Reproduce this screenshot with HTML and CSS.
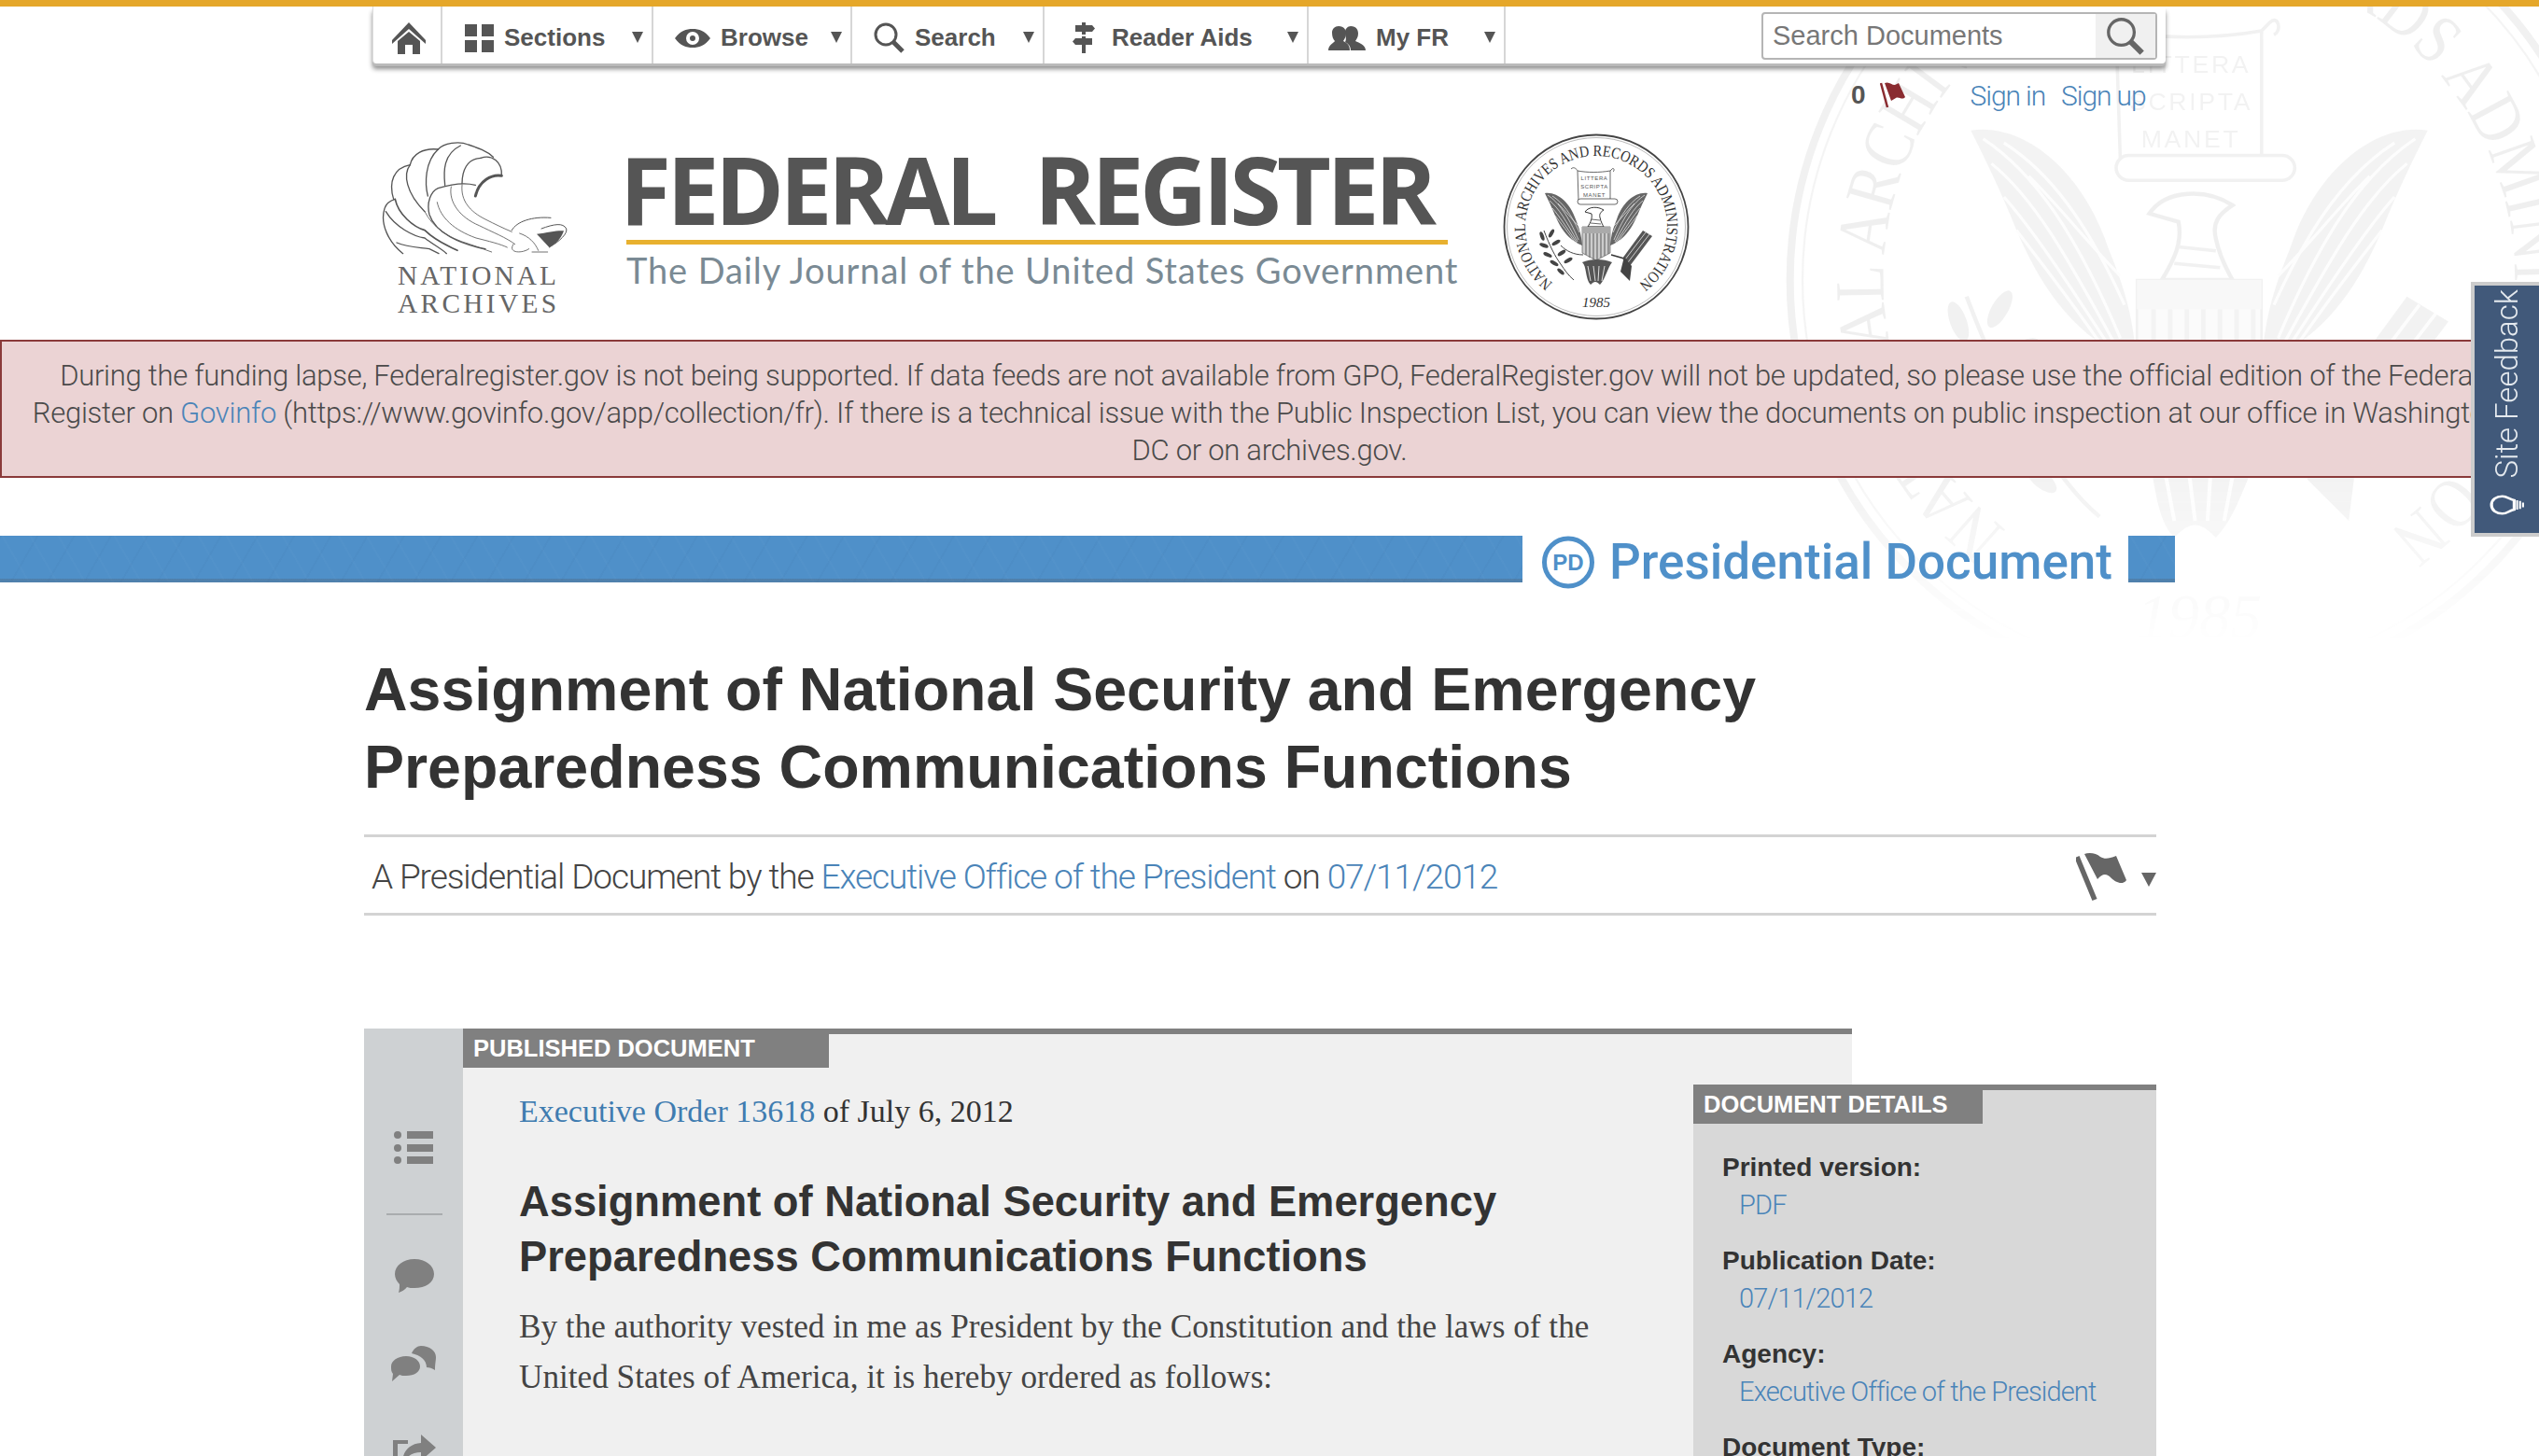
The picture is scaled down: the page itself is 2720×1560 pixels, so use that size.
FILE: index.html
```html
<!DOCTYPE html>
<html lang="en">
<head>
<meta charset="utf-8">
<title>Federal Register</title>
<link rel="stylesheet" href="styles.css">
</head>
<body>
<svg class="defs" width="0" height="0" aria-hidden="true">
  <defs>
    <path id="sealArc" d="M -46.400,60.200 A 76,76 0 1 1 46.400,60.200"/>
    <symbol id="seal" viewBox="-100 -100 200 200" overflow="visible">
      <circle r="98.5" fill="none" stroke="#444" stroke-width="1.8"/>
      <circle r="95.5" fill="none" stroke="#777" stroke-width=".5"/>
      <text class="seal-ring" textLength="378" lengthAdjust="spacingAndGlyphs"><textPath href="#sealArc">NATIONAL ARCHIVES AND RECORDS ADMINISTRATION</textPath></text>
      <text class="seal-year" x="0" y="86" text-anchor="middle">1985</text>
      <path d="M-27,-62 C-24,-65 -21,-62 -20,-60 C-10,-58 4,-58 15,-60 L17,-62 C19,-64 20,-60 18,-59 M-20,-60 L-19,-29 M15,-60 L15,-29" fill="#fff" stroke="#444" stroke-width=".8"/>
      <text class="seal-scroll" x="-2" y="-50" text-anchor="middle">LITTERA</text>
      <text class="seal-scroll" x="-2" y="-41" text-anchor="middle">SCRIPTA</text>
      <text class="seal-scroll" x="-2" y="-32" text-anchor="middle">MANET</text>
      <rect x="-20" y="-30" width="43" height="6" rx="3" fill="#fff" stroke="#444" stroke-width=".8"/>
      <path d="M-55,-36 C-42,-38 -28,-26 -22,-8 C-18,2 -16,8 -15,20 C-30,14 -38,2 -44,-12 C-48,-22 -52,-30 -55,-36 Z" fill="#666"/>
      <path d="M55,-36 C42,-38 28,-26 22,-8 C18,2 16,8 15,20 C30,14 38,2 44,-12 C48,-22 52,-30 55,-36 Z" fill="#666"/>
      <path d="M-52,-34 C-40,-26 -30,-12 -19,14 M-47,-33 C-36,-26 -27,-14 -18,6 M-50,-28 C-40,-20 -32,-6 -20,16 M-47,-20 C-40,-12 -32,0 -21,17 M-44,-12 C-38,-4 -30,6 -22,18 M-41,-25 C-33,-17 -26,-8 -19,-1 M52,-34 C40,-26 30,-12 19,14 M47,-33 C36,-26 27,-14 18,6 M50,-28 C40,-20 32,-6 20,16 M47,-20 C40,-12 32,0 21,17 M44,-12 C38,-4 30,6 22,18 M41,-25 C33,-17 26,-8 19,-1" fill="none" stroke="#f0f0f0" stroke-width=".7"/>
      <path d="M-12,-16 C-8,-22 2,-22 8,-18 C5,-16 3,-14 4,-10 C5,-5 7,-2 8,0 L-9,0 C-6,-5 -4,-9 -5,-14 Z" fill="#fff" stroke="#333" stroke-width="1"/>
      <path d="M-5,-8 L4,-7 M-6,-4 L5,-3" stroke="#444" stroke-width=".8"/>
      <path d="M-15,0 L15,0 L15,28 L0,36 L-15,28 Z" fill="#ccc" stroke="#444" stroke-width=".6"/>
      <path d="M-15,0 H15 V7 H-15 Z" fill="#aaa"/>
      <path d="M-11,7 V30 M-7,7 V33 M-3,7 V35 M1,7 V35 M5,7 V33 M9,7 V31 M13,7 V29" stroke="#666" stroke-width="1.100"/>
      <path d="M-15,38 C-10,42 -12,56 -6,62 C-2,58 0,58 4,62 C10,56 12,44 17,38 C8,34 -6,34 -15,38 Z" fill="#555"/>
      <path d="M-9,42 L-6,58 M-3,42 L-1,58 M3,42 L2,58 M9,42 L6,58" stroke="#eee" stroke-width=".9"/>
      <path d="M-14,30 C-24,30 -32,26 -38,20 M-56,4 C-50,20 -44,32 -38,40 C-34,46 -30,52 -24,57" fill="none" stroke="#444" stroke-width="1"/>
      <g fill="#444">
        <ellipse cx="-58" cy="10" rx="2" ry="5" transform="rotate(-20 -58 10)"/>
        <ellipse cx="-48" cy="7" rx="2" ry="5" transform="rotate(30 -48 7)"/>
        <ellipse cx="-56" cy="20" rx="5" ry="2" transform="rotate(20 -56 20)"/>
        <ellipse cx="-43" cy="17" rx="5" ry="2" transform="rotate(-30 -43 17)"/>
        <ellipse cx="-52" cy="30" rx="5" ry="2" transform="rotate(25 -52 30)"/>
        <ellipse cx="-37" cy="28" rx="5" ry="2" transform="rotate(-35 -37 28)"/>
        <ellipse cx="-45" cy="39" rx="5" ry="2" transform="rotate(30 -45 39)"/>
        <ellipse cx="-30" cy="36" rx="5" ry="2" transform="rotate(-30 -30 36)"/>
        <ellipse cx="-38" cy="48" rx="4.500" ry="2" transform="rotate(40 -38 48)"/>
      </g>
      <path d="M16,30 L30,34" stroke="#333" stroke-width="1.500" fill="none"/>
      <path d="M28,34 L50,4 L60,10 L36,42 Z" fill="#555"/>
      <path d="M31,35 L53,6 M34,38 L57,8" stroke="#eee" stroke-width=".8" fill="none"/>
      <path d="M30,32 L38,42 L36,58 L26,48 Z" fill="#444"/>
    </symbol>
  </defs>
</svg>

<svg class="watermark" viewBox="-100 -100 200 200" aria-hidden="true"><use href="#seal" x="-100" y="-100" width="200" height="200"/></svg>

<div class="topbar"></div>

<nav class="nav">
  <a class="cell home"><svg width="36" height="34" viewBox="0 0 36 34"><path d="M18,0 L36,19 L36,23 L18,7 L0,23 L0,19 Z M6,20 L18,10 L30,20 L30,34 L22,34 L22,24 L14,24 L14,34 L6,34 Z" fill="#555"/></svg></a>
  <a class="cell sections"><svg width="31" height="30" viewBox="0 0 31 30"><path d="M0,0 H13 V13 H0 Z M18,0 H31 V13 H18 Z M0,17 H13 V30 H0 Z M18,17 H31 V30 H18 Z" fill="#555"/></svg><span>Sections</span><i class="caret"></i></a>
  <a class="cell browse"><svg width="38" height="20" viewBox="0 0 38 20"><path d="M0,10 C6,2 12,0 19,0 C26,0 32,2 38,10 C32,18 26,20 19,20 C12,20 6,18 0,10 Z M19,3 A7,7 0 1 0 19,17 A7,7 0 1 0 19,3 Z M19,7 A3,3 0 1 1 19,13 A3,3 0 1 1 19,7 Z" fill="#555" fill-rule="evenodd"/></svg><span>Browse</span><i class="caret"></i></a>
  <a class="cell search"><svg width="33" height="33" viewBox="0 0 33 33"><circle cx="13" cy="13" r="11" fill="none" stroke="#555" stroke-width="3"/><path d="M21,21 L31,31" stroke="#555" stroke-width="5"/></svg><span>Search</span><i class="caret"></i></a>
  <a class="cell aids"><svg width="24" height="33" viewBox="0 0 24 33"><path d="M10,0 H14 V3 H21 L24,6.5 L21,10 H14 V13 H10 V10 H3 V3 H10 Z M10,15 H14 V17 H21 V24 H14 V33 H10 V24 H3 L0,20.500 L3,17 H10 Z" fill="#555"/></svg><span>Reader Aids</span><i class="caret"></i></a>
  <a class="cell myfr"><svg width="40" height="26" viewBox="0 0 40 26"><path d="M24,0 C30,0 32,4 32,8 C32,12 30,14 29,16 C33,18 40,20 40,26 L24,26 C24,22 22,19 18,17 C20,14 18,10 18,6 C18,3 21,0 24,0 Z" fill="#555"/><path d="M11,0 C17,0 19,4 19,8 C19,12 17,14 16,16 C20,18 23,20 23,26 L0,26 C0,20 6,18 7,16 C5,14 4,11 4,7 C4,3 7,0 11,0 Z" fill="#555"/></svg><span>My FR</span><i class="caret"></i></a>
  <div class="searchbox">
    <span class="placeholder">Search Documents</span>
    <span class="searchbtn"><svg width="42" height="42" viewBox="0 0 38 38"><circle cx="15" cy="15" r="12.500" fill="none" stroke="#666" stroke-width="3"/><path d="M24,24 L35,35" stroke="#666" stroke-width="5.500"/></svg></span>
  </div>
</nav>

<div class="account">
  <span class="count">0</span>
  <svg class="miniflag" width="28" height="28" viewBox="0 0 28 28"><path d="M1,1 L8,27" stroke="#8a2b30" stroke-width="2.500"/><path d="M5,1 C10,-1 12,3 16,3 L20,1 L27,16 C24,20 20,15 17,17 L12,20 Z" fill="#8a2b30"/></svg>
  <a class="link signin">Sign in</a>
  <a class="link signup">Sign up</a>
</div>

<header class="masthead">
  <svg class="naralogo" viewBox="0 0 780 660" width="260" height="220" aria-label="National Archives">
    <g fill="none" stroke="#555" stroke-width="4" stroke-linecap="round">
      <path d="M155,425 C110,390 80,330 96,280 C102,262 116,254 130,250"/>
      <path d="M125,250 C108,195 125,150 178,140"/>
      <path d="M178,140 C185,105 220,85 268,90"/>
      <path d="M268,90 C285,70 335,62 365,75 C395,85 425,95 445,115"/>
      <path d="M405,118 C440,105 475,130 472,175"/>
      <path d="M472,175 C440,170 400,190 388,240" stroke-width="9"/>
      <path d="M388,205 C350,195 300,205 268,215 C245,225 230,260 240,300 C260,360 340,395 420,410"/>
      <path d="M178,140 C155,170 165,230 225,290"/>
      <path d="M268,90 C225,130 225,200 235,240"/>
      <path d="M340,78 C285,105 285,160 290,205"/>
      <path d="M405,118 C360,120 345,160 345,200"/>
      <path d="M130,250 C140,300 190,340 225,350 C260,385 300,400 330,415" stroke-width="5"/>
      <path d="M100,290 C130,340 190,370 225,375 C250,395 280,410 295,425"/>
      <path d="M135,390 C170,405 205,405 240,410 L270,425"/>
      <path d="M310,210 C300,260 340,310 400,335 C440,355 490,375 515,395" stroke-width="2.500"/>
      <path d="M345,205 C340,255 370,290 420,315 C450,330 480,345 505,355" stroke-width="2.500"/>
      <path d="M265,260 C275,310 320,350 390,375 C430,385 470,395 490,405" stroke-width="2.500"/>
      <path d="M225,290 C250,340 300,375 370,395 L440,420" stroke-width="2.500"/>
      <path d="M505,350 C520,322 570,305 630,310 M600,345 C640,330 670,325 680,345 C685,360 660,385 625,405" stroke-width="3"/>
      <path d="M510,395 C490,425 540,425 560,410 M570,420 L620,420 M530,360 C560,370 580,390 590,415" stroke-width="2.500"/>
    </g>
    <path d="M585,362 C620,358 650,350 672,352 C665,375 645,395 625,405 Z" fill="#555"/>
    <text class="nara-text" x="138" y="524" textLength="510">NATIONAL</text>
    <text class="nara-text" x="138" y="614" textLength="510">ARCHIVES</text>
  </svg>
  <div class="wordmark">
    <div class="fr-title">FEDERAL&nbsp; REGISTER</div>
    <div class="fr-rule"></div>
    <div class="fr-tag">The Daily Journal of the United States Government</div>
  </div>
  <svg class="smallseal" width="200" height="200" viewBox="-100 -100 200 200" aria-label="Seal"><use href="#seal" x="-100" y="-100" width="200" height="200"/></svg>
</header>

<aside class="banner">
  During the funding lapse, Federalregister.gov is not being supported. If data feeds are not available from GPO, FederalRegister.gov will not be updated, so please use the official edition of the Federal<br>
  Register on <a class="link">Govinfo</a> (https://www.govinfo.gov/app/collection/fr). If there is a technical issue with the Public Inspection List, you can view the documents on public inspection at our office in Washington,<br>
  DC or on archives.gov.
</aside>

<div class="band">
  <div class="band-bar"></div>
  <svg class="pd" width="56" height="57" viewBox="0 0 56 57"><circle cx="28" cy="28.500" r="25.500" fill="none" stroke="#4f90c9" stroke-width="5"/><text x="28" y="37" text-anchor="middle" class="pd-text">PD</text></svg>
  <div class="band-title">Presidential Document</div>
  <div class="band-end"></div>
</div>

<main class="page">
  <h1 class="title">Assignment of National Security and Emergency<br>Preparedness Communications Functions</h1>
  <div class="byline">
    <span>A Presidential Document by the <a class="link">Executive Office of the President</a> on <a class="link">07/11/2012</a></span>
    <span class="flagset">
      <svg width="55" height="52" viewBox="0 0 55 52"><path d="M1,4 L20,50" stroke="#666" stroke-width="5.500"/><path d="M9,1 C14,-1 22,0 26,4 C31,7 35,6 43,3 L54,29 C50,35 42,31 38,27 C33,22 29,21 23,28 Z" fill="#666"/></svg>
      <i class="caret big"></i>
    </span>
  </div>
  <section class="doc">
    <div class="rail">
      <svg class="r-list" width="42" height="36" viewBox="0 0 42 36"><g fill="#808080"><circle cx="4" cy="4" r="4"/><circle cx="4" cy="18" r="4"/><circle cx="4" cy="31" r="4"/><rect x="14" y="0" width="28" height="8"/><rect x="14" y="14" width="28" height="8"/><rect x="14" y="27" width="28" height="8"/></g></svg>
      <div class="r-rule"></div>
      <svg class="r-comment" width="42" height="36" viewBox="0 0 42 36"><path d="M21,0 C33,0 42,7 42,16 C42,25 33,31 21,31 C18,31 15,31 13,30 C11,33 7,35 4,36 C5,33 5,29 5,27 C2,24 0,20 0,16 C0,7 9,0 21,0 Z" fill="#808080"/></svg>
      <svg class="r-comments" width="48" height="38" viewBox="0 0 48 38"><path d="M32,0 C41,0 48,5 48,12 C48,16 47,19 47,26 C44,24 41,23 38,23 C38,15 31,10 22,8 C24,3 28,0 32,0 Z" fill="#808080"/><path d="M16,11 C25,11 31,16 31,22 C31,28 25,32 16,32 C13,32 11,32 9,31 L1,38 L2,30 C0,28 0,25 0,22 C0,16 7,11 16,11 Z" fill="#808080"/></svg>
      <svg class="r-share" width="46" height="44" viewBox="0 0 46 44"><path d="M30,0 L46,14 L30,28 L30,19 C20,19 13,24 10,34 C9,20 16,10 30,9 Z" fill="#808080"/><path d="M0,6 H16 V10 H5 V44 H0 Z" fill="#808080"/></svg>
    </div>
    <div class="main">
      <div class="tab tab-pub">PUBLISHED DOCUMENT</div>
      <div class="body">
        <p class="eo"><a class="link">Executive Order 13618</a> of July 6, 2012</p>
        <h2 class="subtitle">Assignment of National Security and Emergency<br>Preparedness Communications Functions</h2>
        <p class="para">By the authority vested in me as President by the Constitution and the laws of the<br>United States of America, it is hereby ordered as follows:</p>
      </div>
    </div>
    <div class="details">
      <div class="tab tab-det">DOCUMENT DETAILS</div>
      <dl class="dl">
        <dt>Printed version:</dt><dd><a class="link">PDF</a></dd>
        <dt>Publication Date:</dt><dd><a class="link">07/11/2012</a></dd>
        <dt>Agency:</dt><dd><a class="link">Executive Office of the President</a></dd>
        <dt>Document Type:</dt>
      </dl>
    </div>
  </section>
</main>

<a class="feedback">
  <span class="fb-text">Site Feedback</span>
  <svg class="fb-icon" width="22" height="38" viewBox="0 0 26 36" preserveAspectRatio="none"><path d="M13,2 C20,2 24,7 24,13 C24,18 20,20 19,25 L7,25 C6,20 2,18 2,13 C2,7 6,2 13,2 Z" fill="none" stroke="#fff" stroke-width="3"/><path d="M7,28 H19 M8,31 H18 M10,34 H16" stroke="#fff" stroke-width="2"/></svg>
</a>
</body>
</html>
```

FILE: styles.css
```css
* { box-sizing: border-box; }
html, body { margin: 0; padding: 0; }
body {
  position: relative;
  width: 2720px;
  height: 1560px;
  overflow: hidden;
  background: #fff;
  color: #333;
  font-family: "Liberation Sans", Arial, sans-serif;
}
a { text-decoration: none; }
.link { color: #4a84b8; }
.defs { position: absolute; }

.watermark {
  position: absolute;
  left: 1911px;
  top: -145px;
  width: 890px;
  height: 890px;
  opacity: .07;
  pointer-events: none;
  -webkit-mask-image: linear-gradient(to bottom, #000 640px, transparent 840px);
  mask-image: linear-gradient(to bottom, #000 640px, transparent 840px);
}
.seal-ring { font: 17px "Liberation Serif", serif; fill: #333; }
.seal-year { font: italic 15px "Liberation Serif", serif; fill: #333; }
.seal-scroll { font: 6px "Liberation Sans", sans-serif; fill: #555; letter-spacing: .6px; }

.topbar { position: relative; height: 7px; background: #e5a72a; }

/* nav */
.nav {
  position: relative;
  display: flex;
  align-items: stretch;
  width: 1921px;
  height: 61px;
  margin-left: 399px;
  background: #fff;
  border-left: 1px solid #ddd;
  box-shadow: 0 3px 1px #bbb, 0 6px 5px rgba(0,0,0,.45);
  border-radius: 0 0 4px 4px;
}
.cell {
  display: flex;
  align-items: center;
  padding-top: 6px;
  border-right: 2px solid #d6d6d6;
  color: #555;
  font-size: 26px;
  font-weight: 700;
  position: relative;
}
.cell svg { flex: none; margin-right: 11px; }
.home { width: 74px; padding-left: 20px; }
.sections { width: 226px; padding-left: 24px; }
.browse { width: 213px; padding-left: 23px; }
.search { width: 206px; padding-left: 23px; }
.aids { width: 283px; padding-left: 30px; }
.aids svg { margin-right: 18px; }
.myfr { width: 211px; padding-left: 21px; }
.caret {
  width: 0;
  height: 0;
  border-left: 6px solid transparent;
  border-right: 6px solid transparent;
  border-top: 12px solid #555;
}
.cell .caret { position: absolute; right: 9px; top: 27px; }
.searchbox {
  display: flex;
  align-items: stretch;
  width: 424px;
  height: 51px;
  margin: 6px 9px 0 auto;
  border: 2px solid #b5b5b5;
  border-radius: 4px;
  background: #fff;
}
.placeholder {
  flex: 1;
  padding-left: 10px;
  font-size: 29px;
  line-height: 46px;
  color: #777;
}
.searchbtn {
  display: flex;
  align-items: center;
  justify-content: center;
  width: 64px;
  background: #f0f0f0;
}

/* account */
.account {
  position: relative;
  display: flex;
  align-items: center;
  height: 62px;
  padding: 6px 0 0 1983px;
}
.count { font-weight: 700; color: #555; font-size: 28px; }
.miniflag { margin-left: 15px; }
.account .link { font-family: Roboto, sans-serif; font-weight: 300; font-size: 30px; letter-spacing: -1.100px; }
.signin { margin-left: 69px; }
.signup { margin-left: 17px; }

/* masthead */
.masthead {
  position: relative;
  display: flex;
  align-items: flex-start;
  height: 234px;
  padding-left: 380px;
}
.naralogo { flex: none; }
.nara-text { font: 88px "Liberation Serif", serif; fill: #666; }
.wordmark { width: 885px; margin-left: 28px; }
.fr-title {
  margin: 18px 0 0 -4px;
  font-family: "Open Sans", sans-serif;
  font-size: 100px;
  line-height: 109px;
  font-weight: 700;
  color: #555;
  letter-spacing: -4.500px;
  white-space: nowrap;
}
.fr-rule { width: 880px; height: 5px; margin: 0 0 0 3px; background: #e8b12f; }
.fr-tag {
  margin: 4px 0 0 3px;
  font-family: Lato, sans-serif;
  font-size: 38px;
  line-height: 46px;
  color: #7a8a94;
  letter-spacing: .9px;
  white-space: nowrap;
}
.smallseal { flex: none; margin: 13px 0 0 57px; }

/* banner */
.banner {
  position: relative;
  height: 148px;
  padding: 17px 0 0;
  background: #ebd3d4;
  border: 2px solid #8a3a3a;
  font-family: Roboto, sans-serif;
  font-weight: 300;
  font-size: 31px;
  letter-spacing: -.28px;
  line-height: 40px;
  color: #4a4a4a;
  text-align: center;
  white-space: nowrap;
}

/* band */
.band {
  position: relative;
  display: flex;
  align-items: flex-start;
  height: 50px;
  margin-top: 62px;
}
.band-bar, .band-end {
  height: 50px;
  background:
    linear-gradient(to bottom, transparent 46px, rgba(80,100,120,.35) 46px),
    repeating-linear-gradient(60deg, rgba(255,255,255,.02) 0 2px, transparent 2px 26px),
    repeating-linear-gradient(120deg, rgba(0,0,60,.025) 0 2px, transparent 2px 34px),
    #4f90c9;
}
.band-bar { width: 1631px; }
.band-end { width: 50px; margin-left: 20px; }
.pd { flex: none; margin-left: 21px; }
.pd-text { font: 700 24px "Liberation Sans Narrow", "Liberation Sans", sans-serif; fill: #4f90c9; }
.band-title {
  margin-left: 16px;
  width: 536px;
  font-family: Roboto, sans-serif;
  font-size: 53px;
  line-height: 56px;
  font-weight: 500;
  color: #4f90c9;
  white-space: nowrap;
}

/* page */
.page { position: relative; padding: 74px 410px 0 390px; }
.title {
  margin: 0;
  font-size: 64.500px;
  line-height: 83px;
  font-weight: 700;
  color: #333;
}
.byline {
  display: flex;
  align-items: center;
  justify-content: space-between;
  height: 87px;
  margin-top: 30px;
  padding: 4px 0 0 8px;
  border-top: 3px solid #d3d3d3;
  border-bottom: 3px solid #d3d3d3;
  font-family: Roboto, sans-serif;
  font-weight: 300;
  font-size: 37px;
  letter-spacing: -1.100px;
  color: #444;
}
.flagset { display: flex; align-items: center; }
.caret.big {
  margin-left: 15px;
  margin-top: 5px;
  border-left-width: 8.500px;
  border-right-width: 8.500px;
  border-top: 15px solid #666;
}

/* doc */
.doc {
  position: relative;
  display: flex;
  width: 1920px;
  height: 458px;
  margin-top: 121px;
  overflow: hidden;
}
.rail {
  display: flex;
  flex-direction: column;
  align-items: flex-start;
  flex: none;
  width: 106px;
  background: #ced1d3;
}
.r-list { margin: 110px 0 0 32px; flex: none; }
.r-rule { width: 60px; height: 2px; margin: 52px 0 0 24px; background: #a9acae; flex: none; }
.r-comment { margin: 47px 0 0 33px; flex: none; }
.r-comments { margin: 57px 0 0 29px; flex: none; }
.r-share { margin: 57px 0 0 31px; flex: none; }
.main {
  flex: none;
  width: 1488px;
  background: #f0f0f0;
  border-top: 6px solid #808080;
}
.tab {
  background: #808080;
  color: #fff;
  font-size: 25.500px;
  font-weight: 700;
  line-height: 30px;
  height: 36px;
  white-space: nowrap;
}
.tab-pub { width: 392px; padding-left: 11px; }
.tab-det { width: 310px; padding-left: 11px; }
.body { padding: 20px 0 0 60px; }
.eo {
  margin: 0;
  font-family: "Liberation Serif", serif;
  font-size: 34px;
  line-height: 54px;
  color: #333;
}
.eo .link { color: #3f7cb0; }
.subtitle {
  margin: 40px 0 0;
  font-size: 45.300px;
  line-height: 59px;
  font-weight: 700;
  color: #333;
}
.para {
  margin: 19px 0 0;
  font-family: "Liberation Serif", serif;
  font-size: 35.200px;
  line-height: 54px;
  color: #444;
}
.details {
  position: absolute;
  left: 1424px;
  top: 60px;
  width: 496px;
  height: 398px;
  background: #d8d8d8;
  border-top: 6px solid #808080;
}
.dl { margin: 0; padding: 27px 0 0 31px; font-size: 28px; line-height: 40px; }
.dl dt { font-weight: 700; color: #333; margin-top: 20px; }
.dl dt:first-child { margin-top: 0; }
.dl dd {
  margin: 0 0 0 18px;
  font-family: Roboto, sans-serif;
  font-weight: 300;
  font-size: 29px;
  letter-spacing: -.85px;
}

/* feedback */
.feedback {
  position: absolute;
  left: 2647px;
  top: 302px;
  display: flex;
  flex-direction: column;
  align-items: center;
  justify-content: flex-end;
  width: 73px;
  height: 273px;
  padding-bottom: 11px;
  background: #41597a;
  border: 4px solid #ccc;
  border-right: 0;
}
.fb-text {
  writing-mode: vertical-rl;
  transform: rotate(180deg);
  font-family: Roboto, sans-serif;
  font-weight: 300;
  font-size: 33px;
  color: #e4e9ee;
  white-space: nowrap;
  margin-bottom: 9px;
}
.fb-icon { transform: rotate(-90deg); }
```
